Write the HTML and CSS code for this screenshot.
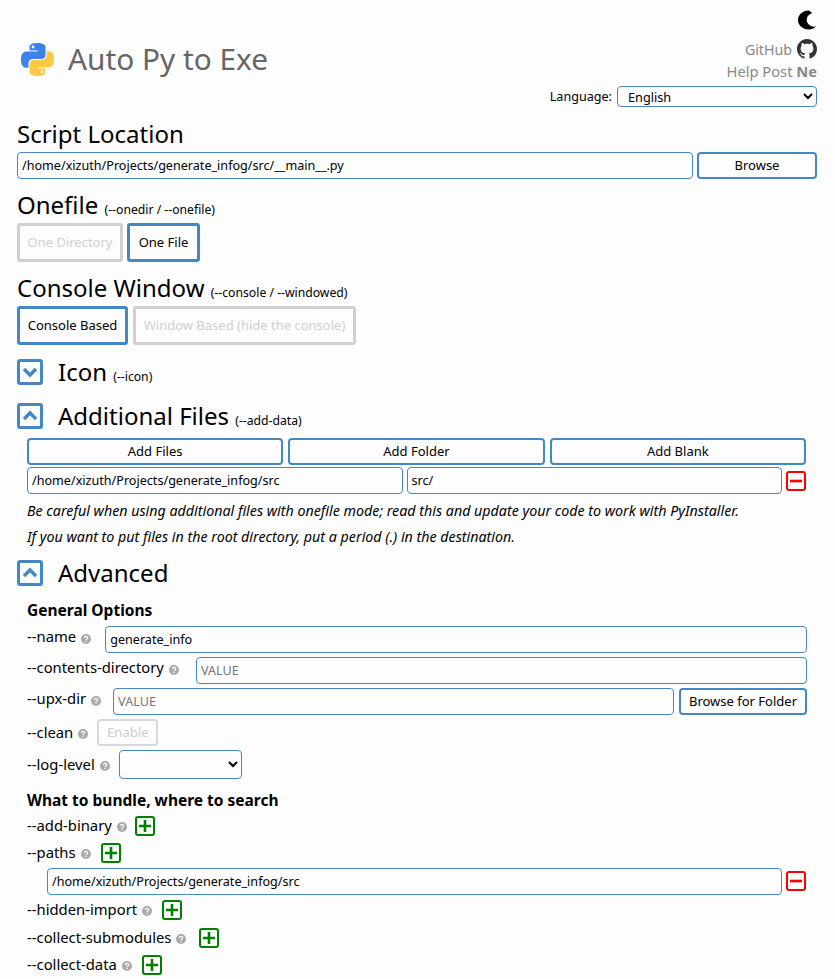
FILE: index.html
```html
<!DOCTYPE html>
<html lang="en">
<head>
    <meta charset="UTF-8">
    <meta name="viewport" content="width=device-width, initial-scale=1.0">
    <title>Auto Py to Exe</title>
    <link rel="stylesheet" href="styles.css">
</head>
<body>
    <svg class="defs" width="0" height="0" aria-hidden="true">
        <symbol id="help" viewBox="0 0 10 10">
            <circle cx="5" cy="5" r="5" fill="#a9a9a9"/>
            <path d="M3.400 3.900c0-2 3.300-2 3.300-.1 0 1.200-1.700 1.200-1.700 2.400" fill="none" stroke="#fdfdfd" stroke-width="1.200"/>
            <rect x="4.400" y="6.900" width="1.200" height="1.200" fill="#fdfdfd"/>
        </symbol>
        <symbol id="plus" viewBox="0 0 20 20">
            <rect x="1" y="1" width="18" height="18" rx="2" fill="none" stroke="#008000" stroke-width="2"/>
            <path d="M10 4v12M4 10h12" stroke="#008000" stroke-width="2.600"/>
        </symbol>
        <symbol id="minus" viewBox="0 0 20 20">
            <rect x="1" y="1" width="18" height="18" rx="2" fill="none" stroke="#f00" stroke-width="2"/>
            <path d="M4 10h12" stroke="#f00" stroke-width="2.600"/>
        </symbol>
    </svg>

    <header class="top">
        <div class="brand">
            <svg class="logo" viewBox="0 0 110 110" aria-hidden="true">
                <path fill="#3c83e8" d="M54.900 0C26.800 0 28.600 12.200 28.600 12.200v12.600h26.800v3.800H17.900S0 26.600 0 54.900c0 28.300 15.600 27.300 15.600 27.300h9.300V69.100s-.5-15.600 15.400-15.600h26.600s14.900.2 14.900-14.400V14.900S84.100 0 54.900 0zM40.100 8.500a4.800 4.800 0 1 1 0 9.600 4.800 4.800 0 0 1 0-9.600z"/>
                <path fill="#fcc83f" transform="rotate(180 55 55)" d="M54.900 0C26.800 0 28.600 12.200 28.600 12.200v12.600h26.800v3.800H17.900S0 26.600 0 54.900c0 28.300 15.600 27.300 15.600 27.300h9.300V69.100s-.5-15.600 15.400-15.600h26.600s14.900.2 14.900-14.400V14.900S84.100 0 54.900 0zM40.100 8.500a4.800 4.800 0 1 1 0 9.600 4.800 4.800 0 0 1 0-9.600z"/>
            </svg>
            <h1>Auto Py to Exe</h1>
        </div>
        <div class="top-right">
            <svg class="moon" viewBox="0 0 20 20" aria-hidden="true">
                <path fill="#000" d="M11.200 0C5 0 0 4.500 0 10s5 10 11.200 10c3.100 0 5.900-1.200 7.800-3.100-.5.100-1 .1-1.500.1-4.600 0-8.300-3.100-8.300-7 0-3.400 2.400-6.200 5.700-7-.3-.2-2.300-3-3.700-3z"/>
            </svg>
            <a class="top-link">GitHub
                <svg class="github" viewBox="0 0 16 16" aria-hidden="true">
                    <path fill="#333" d="M8 0C3.580 0 0 3.580 0 8c0 3.540 2.290 6.530 5.470 7.590.4.07.55-.17.55-.38 0-.19-.01-.82-.01-1.490-2.010.37-2.530-.49-2.690-.94-.09-.23-.48-.94-.82-1.130-.28-.15-.68-.52-.01-.53.63-.01 1.080.58 1.230.82.72 1.210 1.870.87 2.330.66.07-.52.28-.87.51-1.070-1.780-.2-3.640-.89-3.640-3.950 0-.87.31-1.590.82-2.150-.08-.2-.36-1.020.08-2.120 0 0 .67-.21 2.200.82.64-.18 1.320-.27 2-.27.68 0 1.360.09 2 .27 1.530-1.040 2.200-.82 2.200-.82.44 1.100.16 1.920.08 2.120.51.56.82 1.270.82 2.150 0 3.070-1.870 3.750-3.650 3.950.29.25.54.73.54 1.480 0 1.070-.01 1.930-.01 2.200 0 .21.15.46.55.38A8.013 8.013 0 0 0 16 8c0-4.420-3.580-8-8-8z"/>
                </svg>
            </a>
            <a class="top-link help-post">Help Post <b>Ne</b></a>
            <div class="language">
                <label for="language">Language:</label>
                <select id="language"><option>English</option></select>
            </div>
        </div>
    </header>

    <h2 class="first">Script Location</h2>
    <div class="row">
        <input class="grow" type="text" value="/home/xizuth/Projects/generate_infog/src/__main__.py">
        <button class="btn browse">Browse</button>
    </div>

    <h2>Onefile <small>(--onedir / --onefile)</small></h2>
    <div class="choices">
        <button class="choice one-dir off">One Directory</button>
        <button class="choice one-file">One File</button>
    </div>

    <h2>Console Window <small>(--console / --windowed)</small></h2>
    <div class="choices">
        <button class="choice console">Console Based</button>
        <button class="choice windowed off">Window Based (hide the console)</button>
    </div>

    <div class="section-head">
        <button class="toggle"><svg viewBox="0 0 20 20" aria-hidden="true"><path d="M4 7l6 6 6-6" fill="none" stroke="#4487c4" stroke-width="3.400"/></svg></button>
        <h2>Icon <small>(--icon)</small></h2>
    </div>

    <div class="section-head">
        <button class="toggle"><svg viewBox="0 0 20 20" aria-hidden="true"><path d="M4 13l6-6 6 6" fill="none" stroke="#4487c4" stroke-width="3.400"/></svg></button>
        <h2>Additional Files <small>(--add-data)</small></h2>
    </div>
    <div class="section-body">
        <div class="add-buttons">
            <button class="btn">Add Files</button>
            <button class="btn">Add Folder</button>
            <button class="btn">Add Blank</button>
        </div>
        <div class="row pair">
            <input class="grow" type="text" value="/home/xizuth/Projects/generate_infog/src">
            <input class="grow" type="text" value="src/">
            <button class="remove"><svg><use href="#minus"/></svg></button>
        </div>
        <p class="note">Be careful when using additional files with onefile mode; read this and update your code to work with PyInstaller.</p>
        <p class="note">If you want to put files in the root directory, put a period (.) in the destination.</p>
    </div>

    <div class="section-head advanced">
        <button class="toggle"><svg viewBox="0 0 20 20" aria-hidden="true"><path d="M4 13l6-6 6 6" fill="none" stroke="#4487c4" stroke-width="3.400"/></svg></button>
        <h2>Advanced</h2>
    </div>
    <div class="section-body">
        <h3>General Options</h3>
        <div class="option raised opt-tight">
            <span class="opt-name">--name</span><svg class="help"><use href="#help"/></svg>
            <input class="grow" type="text" value="generate_info">
        </div>
        <div class="option raised opt-contents">
            <span class="opt-name">--contents-directory</span><svg class="help"><use href="#help"/></svg>
            <input class="grow" type="text" placeholder="VALUE">
        </div>
        <div class="option raised opt-upx">
            <span class="opt-name">--upx-dir</span><svg class="help"><use href="#help"/></svg>
            <input class="grow" type="text" placeholder="VALUE">
            <button class="btn folder">Browse for Folder</button>
        </div>
        <div class="option">
            <span class="opt-name">--clean</span><svg class="help"><use href="#help"/></svg>
            <button class="enable">Enable</button>
        </div>
        <div class="option log-level">
            <span class="opt-name">--log-level</span><svg class="help"><use href="#help"/></svg>
            <select><option></option></select>
        </div>

        <h3 class="second">What to bundle, where to search</h3>
        <div class="option short opt-binary">
            <span class="opt-name">--add-binary</span><svg class="help"><use href="#help"/></svg>
            <svg class="add"><use href="#plus"/></svg>
        </div>
        <div class="option short">
            <span class="opt-name">--paths</span><svg class="help"><use href="#help"/></svg>
            <svg class="add"><use href="#plus"/></svg>
        </div>
        <div class="row path-row">
            <input class="grow" type="text" value="/home/xizuth/Projects/generate_infog/src">
            <button class="remove"><svg><use href="#minus"/></svg></button>
        </div>
        <div class="option short">
            <span class="opt-name">--hidden-import</span><svg class="help"><use href="#help"/></svg>
            <svg class="add"><use href="#plus"/></svg>
        </div>
        <div class="option short opt-submodules">
            <span class="opt-name">--collect-submodules</span><svg class="help"><use href="#help"/></svg>
            <svg class="add"><use href="#plus"/></svg>
        </div>
        <div class="option short">
            <span class="opt-name">--collect-data</span><svg class="help"><use href="#help"/></svg>
            <svg class="add"><use href="#plus"/></svg>
        </div>
    </div>
</body>
</html>
```

FILE: styles.css
```css
html {
    height: 100%;
    overflow: hidden;
}

body {
    font-family: "Noto Sans", sans-serif;
    font-size: 14px;
    background-color: #fdfdfd;
    color: #000;
    margin: 0;
    padding: 0 18px 0 17px;
}

.defs {
    position: absolute;
}

button, input, select {
    font-family: "Noto Sans", sans-serif;
    font-size: 13px;
    color: #000;
    background: transparent;
    box-sizing: border-box;
    margin: 0;
}

input {
    font-size: 12.600px;
    height: 27px;
    padding: 0 4px;
    border: 1px solid #4487c4;
    border-radius: 4px;
    min-width: 0;
}

input::placeholder {
    color: #777;
}

select {
    font-size: 12.700px;
    border: 1px solid #4487c4;
    border-radius: 4px;
}

.top {
    display: flex;
    justify-content: space-between;
    height: 110px;
}

.brand {
    display: flex;
    align-items: center;
    height: 118px;
    padding-left: 4px;
}

.logo {
    width: 33px;
    height: 33px;
    margin-right: 14px;
}

h1 {
    font-size: 29.800px;
    font-weight: 400;
    color: #666;
    margin: -2px 0 0;
}

.top-right {
    display: flex;
    flex-direction: column;
    align-items: flex-end;
    padding-top: 10px;
}

.moon {
    width: 19px;
    height: 20px;
}

.top-link {
    display: flex;
    align-items: center;
    gap: 5px;
    font-size: 14.200px;
    color: #888;
    height: 22px;
    margin-top: 8px;
}

.help-post {
    display: block;
    font-size: 14.700px;
    white-space: pre;
    line-height: 22px;
    margin-top: 0;
}

.github {
    width: 20px;
    height: 20px;
}

.language {
    display: flex;
    align-items: center;
    gap: 5px;
    font-size: 12.600px;
    margin-top: 4px;
}

.language select {
    width: 200px;
    height: 21px;
    padding-left: 6px;
}

h2 {
    font-size: 24px;
    line-height: 34px;
    font-weight: 400;
    margin: 0;
}

h2 small {
    font-size: 12.200px;
    line-height: 1;
}

h2.first {
    margin-top: 6px;
    line-height: 36px;
}

.row {
    display: flex;
    gap: 4px;
}

.grow {
    flex: 1;
}

.btn {
    height: 27px;
    border: 2px solid #4487c4;
    border-radius: 4px;
    padding: 0 0 2px;
}

.browse {
    width: 120px;
}

.row + h2 {
    margin-top: 9px;
}

.choices {
    display: flex;
    gap: 4px;
    margin: 1px 0 9px;
}

.choices + .section-head {
    margin-top: 14px;
}

.choice {
    height: 39px;
    padding: 0 0 2px;
    border: 3px solid #4487c4;
    border-radius: 3px;
}

.choice.off {
    border-color: #d0d0d0;
    color: #d0d0d0;
}

.one-dir {
    width: 106px;
}

.one-file {
    width: 73px;
}

.console {
    width: 111px;
    margin-right: 1px;
}

.windowed {
    width: 223px;
}

.section-head {
    display: flex;
    align-items: center;
    gap: 15px;
    height: 26px;
    margin-bottom: 18px;
}

.section-head.advanced {
    margin-top: 14px;
    margin-bottom: 13px;
}

.toggle {
    width: 26px;
    height: 26px;
    padding: 0;
    border: 3px solid #4487c4;
    border-radius: 3px;
}

.toggle svg {
    display: block;
    width: 20px;
    height: 20px;
}

.section-body {
    padding: 0 10px;
}

.add-buttons {
    display: grid;
    grid-template-columns: 1fr 1fr 1fr;
    gap: 5px;
    margin-top: -9px;
    padding-right: 1px;
}

.pair {
    margin-top: 2px;
    align-items: center;
}

.remove {
    width: 21px;
    height: 20px;
    padding: 0;
    border: 0;
    flex: none;
}

.remove svg {
    display: block;
    width: 20px;
    height: 20px;
}

.note {
    font-style: italic;
    font-size: 14.250px;
    line-height: 18px;
    margin: 8px 0;
}

h3 {
    font-size: 15.500px;
    line-height: 22px;
    font-weight: 700;
    margin: 0 0 5px;
}

h3.second {
    margin: 10px 0 4px;
}

.option {
    display: flex;
    align-items: center;
    height: 27px;
    margin-bottom: 4px;
}

.opt-name {
    font-size: 14.800px;
    margin-bottom: 2px;
}

.help {
    width: 10px;
    height: 10px;
    margin: 2px 0 0 5px;
    flex: none;
}

.raised .opt-name {
    margin-bottom: 7px;
}

.raised .help {
    margin-top: -2px;
}

.option .grow {
    margin-left: 15px;
}

.opt-tight .grow {
    margin-left: 14px;
}

.opt-contents .grow {
    margin-left: 17px;
}

.opt-upx .grow {
    margin-left: 12px;
}

.folder {
    width: 128px;
    margin-left: 5px;
}

.enable {
    width: 61px;
    height: 27px;
    margin-left: 9px;
    padding: 0 0 2px;
    border: 2px solid #d8d8d8;
    border-radius: 4px;
    color: #ccc;
}

.log-level {
    height: 29px;
}

.log-level select {
    width: 123px;
    height: 29px;
    margin-left: 9px;
}

.option.short {
    height: 21px;
    margin-bottom: 6.500px;
}

.add {
    width: 20px;
    height: 20px;
    margin-left: 10px;
    flex: none;
}

.opt-binary .add {
    margin-left: 8px;
}

.opt-submodules .add {
    margin-left: 13px;
}

.path-row {
    padding-left: 20px;
    align-items: center;
    margin: -2.500px 0 5px;
}
```
